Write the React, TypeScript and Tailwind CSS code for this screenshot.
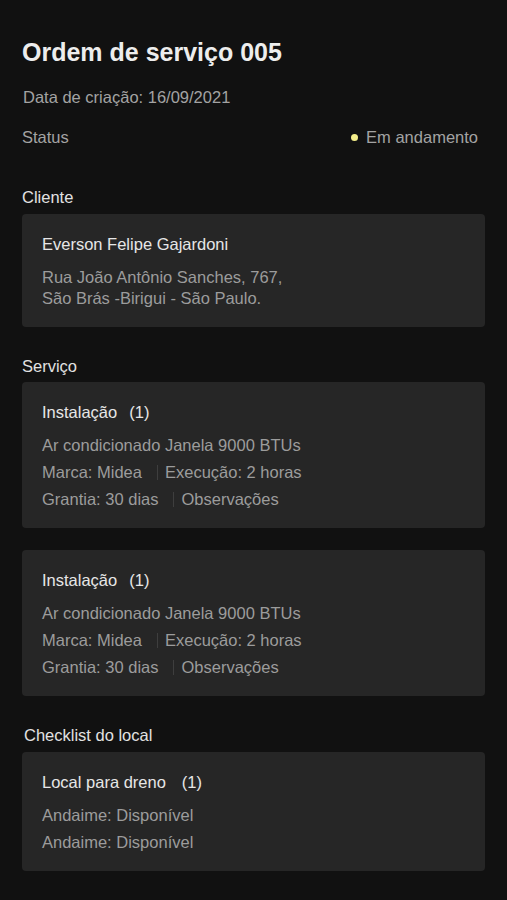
import React from "react";

interface ServiceCardProps {
  title: string;
  qty: number;
}

function ServiceCard({ title, qty }: ServiceCardProps) {
  return (
    <div className="rounded-[4px] bg-[#262626] px-5 pt-5 pb-[15px]">
      <p className="leading-5 text-[#e6e6e6]">
        {title}
        <span className="ml-3">({qty})</span>
      </p>
      <div className="mt-[10px] leading-[27px] text-[#9c9c9c]">
        <p>Ar condicionado Janela 9000 BTUs</p>
        <p className="flex items-center">
          <span>Marca: Midea</span>
          <span className="ml-[15px] mr-[7px] h-[15px] w-px bg-[#3e3e3e]" />
          <span>Execução: 2 horas</span>
        </p>
        <p className="flex items-center">
          <span>Grantia: 30 dias</span>
          <span className="ml-[15px] mr-[7px] h-[15px] w-px bg-[#3e3e3e]" />
          <span>Observações</span>
        </p>
      </div>
    </div>
  );
}

function App() {
  return (
    <div
      className="min-h-[900px] bg-[#111111] px-[22px] pt-[37px] pb-10 text-[16.5px]"
      style={{ fontFamily: '"Liberation Sans", Arial, sans-serif' }}
    >
      <h1 className="text-[25px] font-bold leading-[30px] text-[#ededed]">
        Ordem de serviço 005
      </h1>
      <p className="mt-5 pl-px leading-5 text-[#a3a3a3]">
        Data de criação: 16/09/2021
      </p>
      <div className="mt-5 flex items-center justify-between pr-[7px] leading-5 text-[#a3a3a3]">
        <span>Status</span>
        <span className="flex items-center">
          <span className="mr-[8px] h-[7px] w-[7px] rounded-full bg-[#f3ee8a]" />
          Em andamento
        </span>
      </div>

      <h2 className="mt-10 leading-5 text-[#e2e2e2]">Cliente</h2>
      <div className="mt-[7px] rounded-[4px] bg-[#262626] px-5 pt-5 pb-[18px]">
        <p className="leading-5 text-[#e6e6e6]">Everson Felipe Gajardoni</p>
        <div className="mt-[13px] leading-[21px] text-[#9c9c9c]">
          <p>Rua João Antônio Sanches, 767,</p>
          <p>São Brás -Birigui - São Paulo.</p>
        </div>
      </div>

      <h2 className="mt-[29px] leading-5 text-[#e2e2e2]">Serviço</h2>
      <div className="mt-[6px] flex flex-col gap-[22px]">
        <ServiceCard title="Instalação" qty={1} />
        <ServiceCard title="Instalação" qty={1} />
      </div>

      <h2 className="mt-[29px] pl-[2px] leading-5 text-[#e2e2e2]">
        Checklist do local
      </h2>
      <div className="mt-[7px] rounded-[4px] bg-[#262626] px-5 pt-5 pb-[15px]">
        <p className="leading-5 text-[#e6e6e6]">
          Local para dreno
          <span className="ml-4">(1)</span>
        </p>
        <div className="mt-[10px] leading-[27px] text-[#9c9c9c]">
          <p>Andaime: Disponível</p>
          <p>Andaime: Disponível</p>
        </div>
      </div>
    </div>
  );
}

export default App;
